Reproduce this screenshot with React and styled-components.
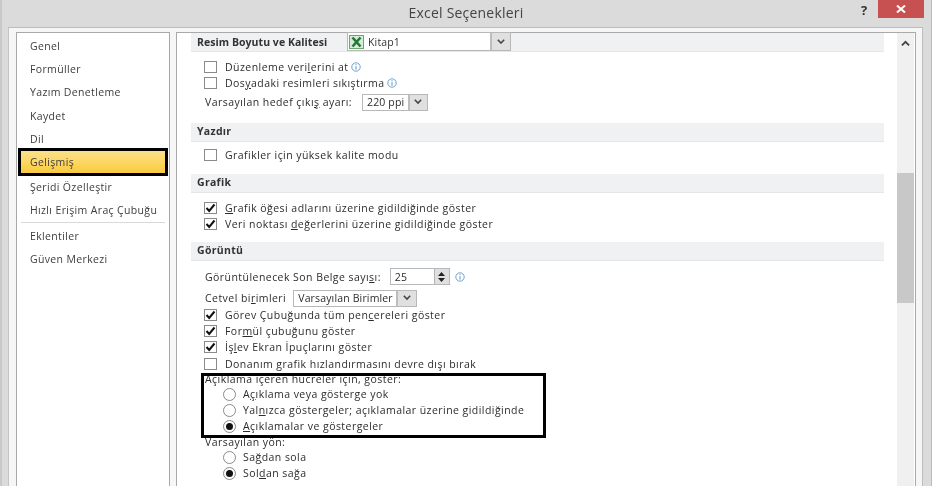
import styled, { createGlobalStyle } from "styled-components";

const Global = createGlobalStyle`
html, body { margin: 0; padding: 0; background: #dcdcdc; }
body { width: 932px; height: 486px; overflow: hidden; }
* { box-sizing: border-box; }
`;

const Win = styled.div`
width: 932px;
height: 486px;
background: #dbdbdb;
box-shadow: inset 2px 0 #c9c9c9, inset -1px 0 #bbb;
font-family: "Open Sans", "Liberation Sans", sans-serif;
font-size: 10.5px;
color: #2c2c2c;
display: flex;
flex-direction: column;
overflow: hidden;
filter: blur(0.45px);
`;

const TitleBar = styled.div`
height: 27px;
flex: none;
display: flex;
justify-content: center;
position: relative;
`;

const Title = styled.div`
font-size: 14px;
color: #444;
line-height: 26px;
letter-spacing: 0.2px;
`;

const Help = styled.div`
position: absolute;
left: 861px;
top: 1px;
font-size: 13px;
font-weight: 700;
color: #333;
`;

const Close = styled.div`
position: absolute;
left: 878px;
top: 0;
width: 46px;
height: 18px;
background: #c75050;
display: flex;
align-items: center;
justify-content: center;
`;

const Body = styled.div`
flex: 1;
min-height: 0;
margin: 0 9px 0 8px;
background: #f6f6f6;
border-top: 1px solid #bdbdbd;
border-left: 1px solid #c4c4c4;
border-right: 1px solid #bdbdbd;
padding: 4px 6px 0 7px;
display: flex;
gap: 6px;
`;

const Nav = styled.div`
width: 154px;
flex: none;
background: #fff;
border: 1px solid #a9a9a9;
border-bottom: 0;
padding: 1px 1px 0 1px;
display: flex;
flex-direction: column;
`;

const NavItem = styled.div`
height: ${p => (p.$active ? "28px" : "23.3px")};
margin: ${p => (p.$active ? "-2.5px 0 -0.5px 0" : "0")};
flex: none;
display: flex;
align-items: center;
padding-left: ${p => (p.$active ? "9px" : "12px")};
letter-spacing: 0.35px;
color: #3c3c3c;
${p => p.$active && `
  position: relative;
  border: 3px solid #000;
  background: linear-gradient(#fbe08d, #fdd65e 55%, #f8c93f);
`}
`;

const NavRule = styled.div`
height: 1px;
flex: none;
background: #d9d9d9;
margin: 0 3px 1px;
`;

const Main = styled.div`
flex: 1;
min-width: 0;
background: #fff;
border: 1px solid #a9a9a9;
border-bottom: 0;
display: flex;
`;

const Content = styled.div`
flex: 1;
min-width: 0;
padding: 0 13px 0 14px;
`;

const Header = styled.div`
height: 19px;
background: #eff1f2;
border-bottom: 1px solid #e4e6e7;
display: flex;
font-weight: 700;
align-items: center;
padding: 0 0 ${p => p.$drop || 2}px 6px;
letter-spacing: 0.3px;
color: #333;
`;

const HeaderLabel = styled.div`
width: 150px;
letter-spacing: 0.05px;
`;

const Section = styled.div`
padding: ${p => p.$pad};
`;

const Row = styled.div`
height: ${p => p.$h || 16}px;
margin-top: ${p => p.$mt || 0}px;
display: flex;
align-items: center;
padding: 0 0 1px ${p => p.$indent || 13}px;
letter-spacing: 0.45px;
white-space: nowrap;
u { text-underline-offset: 1px; text-decoration-thickness: 1px; }
`;

const Box = styled.span`
width: 13px;
height: 12px;
flex: none;
margin-right: 8px;
border: 1px solid #8a8a8a;
background: #fff;
display: flex;
align-items: center;
justify-content: center;
`;

const Radio = styled.span`
width: 13px;
height: 13px;
flex: none;
margin-right: 7px;
border: 1px solid #8a8a8a;
border-radius: 50%;
background: #fff;
display: flex;
align-items: center;
justify-content: center;
&::after {
  content: "";
  display: ${p => (p.$on ? "block" : "none")};
  width: 7px;
  height: 7px;
  border-radius: 50%;
  background: #111;
}
`;

const Field = styled.div`
display: flex;
height: ${p => p.$h || 17}px;
width: ${p => p.$w}px;
margin-left: ${p => p.$ml || 0}px;
border: 1px solid #b8b8b8;
background: #fff;
align-items: stretch;
flex: none;
font-weight: 400;
`;

const FieldText = styled.div`
flex: 1;
min-width: 0;
display: flex;
align-items: center;
gap: 4px;
padding-left: ${p => p.$pl || 4}px;
letter-spacing: 0.15px;
overflow: hidden;
`;

const DropBtn = styled.div`
width: ${p => p.$w || 19}px;
flex: none;
background: #e0e0e0;
border: 1px solid #bdbdbd;
border-width: 0 0 0 2px;
display: flex;
align-items: center;
justify-content: center;
`;

const Spin = styled.div`
width: 15px;
flex: none;
background: #e0e0e0;
border-left: 1px solid #b4b4b4;
display: flex;
flex-direction: column;
align-items: center;
justify-content: center;
gap: 2px;
`;

const Group = styled.div`
position: relative;
margin-top: -0.6px;
`;

const Frame = styled.div`
position: absolute;
left: 10px;
top: 1px;
width: 345px;
height: 65px;
border: 3px solid #000;
pointer-events: none;
`;

const Scrollbar = styled.div`
width: 17px;
flex: none;
margin-right: 1px;
background: #f0f0f0;
position: relative;
display: flex;
justify-content: center;
padding-top: 7px;
`;

const Thumb = styled.div`
position: absolute;
left: 0;
right: 0;
top: 140px;
height: 130px;
background: #c8c8c8;
`;

const Chevron = ({ size = 8, up }) => (
  <svg width={size} height={size * 0.7} viewBox="0 0 10 7">
    <path d={up ? "M1 6L5 2L9 6" : "M1 1L5 5L9 1"} fill="none" stroke="#444" strokeWidth="2" />
  </svg>
);

const Check = () => (
  <svg width="11" height="10" viewBox="0 0 11 10">
    <path d="M1.5 5L4.2 8L9.5 1.5" fill="none" stroke="#111" strokeWidth="2" />
  </svg>
);

const InfoMark = styled.svg`
margin-left: ${p => p.$ml || 2}px;
flex: none;
`;

const Info = ({ ml }) => (
  <InfoMark $ml={ml} width="10" height="10" viewBox="0 0 10 10">
    <circle cx="5" cy="5" r="4.2" fill="#fff" stroke="#6f9fd0" />
    <path d="M5 2.2V3.2M5 4.2V7.6" stroke="#5a8cc0" strokeWidth="1" />
  </InfoMark>
);

const ExcelIcon = () => (
  <svg width="15" height="14" viewBox="0 0 15 14">
    <rect x="0.5" y="0.5" width="14" height="13" fill="#d8ead8" stroke="#6ba66b" />
    <path d="M3.5 2.5L11.5 11.5M11.5 2.5L3.5 11.5" stroke="#1f7a33" strokeWidth="2.6" />
  </svg>
);

const Label = styled.span`
display: flex;
align-items: center;
white-space: pre;
`;

const CheckRow = ({ on, children, ...rest }) => (
  <Row {...rest}>
    <Box>{on && <Check />}</Box>
    <Label>{children}</Label>
  </Row>
);

const RadioRow = ({ on, children }) => (
  <Row $indent={32}>
    <Radio $on={on} />
    <Label>{children}</Label>
  </Row>
);

const navTop = ["Genel", "Formüller", "Yazım Denetleme", "Kaydet", "Dil"];
const navMid = ["Şeridi Özelleştir", "Hızlı Erişim Araç Çubuğu"];
const navEnd = ["Eklentiler", "Güven Merkezi"];

export default function App() {
  return (
    <Win>
      <Global />
      <TitleBar>
        <Title>Excel Seçenekleri</Title>
        <Help>?</Help>
        <Close>
          <svg width="10" height="8" viewBox="0 0 10 8">
            <path d="M1 0.5L9 7.5M9 0.5L1 7.5" stroke="#fff" strokeWidth="2" />
          </svg>
        </Close>
      </TitleBar>
      <Body>
        <Nav>
          {navTop.map(n => <NavItem key={n}>{n}</NavItem>)}
          <NavItem $active>Gelişmiş</NavItem>
          {navMid.map(n => <NavItem key={n}>{n}</NavItem>)}
          <NavRule />
          {navEnd.map(n => <NavItem key={n}>{n}</NavItem>)}
        </Nav>
        <Main>
          <Content>
            <Header $drop={1}>
              <HeaderLabel>Resim Boyutu ve Kalitesi</HeaderLabel>
              <Field $w={164} $h={19}>
                <FieldText $pl={1}><ExcelIcon /> Kitap1</FieldText>
                <DropBtn $w={20}><Chevron /></DropBtn>
              </Field>
            </Header>
            <Section $pad="7px 0 12px">
              <CheckRow>Düzenleme veri<u>l</u>erini at<Info /></CheckRow>
              <CheckRow>Dos<u>y</u>adaki resimleri sıkıştırma<Info /></CheckRow>
              <Row $h={17} $mt={3} $indent={14}>
                <span>Varsayılan hedef çıkı<u>ş</u> ayarı:</span>
                <Field $w={66} $ml={10}>
                  <FieldText>220 ppi</FieldText>
                  <DropBtn $w={19}><Chevron /></DropBtn>
                </Field>
              </Row>
            </Section>
            <Header>Yazdır</Header>
            <Section $pad="5px 0 11px">
              <CheckRow>Grafikler için yüksek kalite modu</CheckRow>
            </Section>
            <Header>Grafik</Header>
            <Section $pad="7px 0 10px">
              <CheckRow on><span><u>G</u>rafik öğesi adlarını üzerine gidildiğinde göster</span></CheckRow>
              <CheckRow on><span>Veri noktası <u>d</u>eğerlerini üzerine gidildiğinde göster</span></CheckRow>
            </Section>
            <Header>Görüntü</Header>
            <Section $pad="8px 0 0">
              <Row $indent={14}>
                <span>Görüntülenecek Son Belge sayı<u>s</u>ı:</span>
                <Field $w={60} $ml={9}>
                  <FieldText>25</FieldText>
                  <Spin>
                    <svg width="7" height="4" viewBox="0 0 7 4"><path d="M3.5 0L7 4H0Z" fill="#222" /></svg>
                    <svg width="7" height="4" viewBox="0 0 7 4"><path d="M3.5 4L7 0H0Z" fill="#222" /></svg>
                  </Spin>
                </Field>
                <Info ml={5} />
              </Row>
              <Row $h={17} $mt={5} $indent={14}>
                <span>Cetvel bi<u>r</u>imleri</span>
                <Field $w={124} $ml={7}>
                  <FieldText>Varsayılan Birimler</FieldText>
                  <DropBtn $w={20}><Chevron /></DropBtn>
                </Field>
              </Row>
              <CheckRow on $h={16.4}><span>Görev Çubuğunda tüm pen<u>c</u>ereleri göster</span></CheckRow>
              <CheckRow on $h={16.4}><span>For<u>m</u>ül çubuğunu göster</span></CheckRow>
              <CheckRow on $h={16.4}><span>İş<u>l</u>ev Ekran İpuçlarını göster</span></CheckRow>
              <CheckRow $h={16.4}>Donanım grafik hızlandırmasını devre dışı bırak</CheckRow>
              <Group>
                <Row $indent={14} $h={15}>Açıklama içeren hücreler için, göster:</Row>
                <RadioRow><span>A<u>ç</u>ıklama veya gösterge yok</span></RadioRow>
                <RadioRow><span>Yal<u>n</u>ızca göstergeler; açıklamalar üzerine gidildiğinde</span></RadioRow>
                <RadioRow on><span><u>A</u>çıklamalar ve göstergeler</span></RadioRow>
                <Frame />
              </Group>
              <Row $indent={14} $h={15}>Varsayılan yön:</Row>
              <RadioRow><span>Sa<u>ğ</u>dan sola</span></RadioRow>
              <RadioRow on><span>Sol<u>d</u>an sağa</span></RadioRow>
            </Section>
          </Content>
          <Scrollbar>
            <Chevron up size={9} />
            <Thumb />
          </Scrollbar>
        </Main>
      </Body>
    </Win>
  );
}
